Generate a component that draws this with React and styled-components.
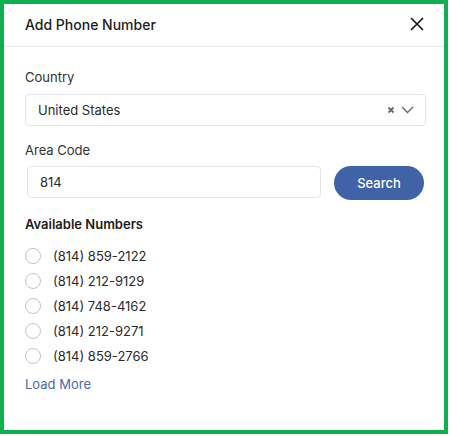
import React from 'react'
import styled, { createGlobalStyle } from 'styled-components'

const Global = createGlobalStyle`
  html, body {
    margin: 0;
    padding: 0;
    background: #fff;
  }
  body {
    font-family: Inter, "Noto Sans", sans-serif;
    color: #222;
  }
  * { box-sizing: border-box; }
`

const Frame = styled.div`
  width: 448px;
  height: 434px;
  border: 4px solid #0db04d;
  background: #fff;
  display: flex;
  flex-direction: column;
`

const Header = styled.header`
  height: 43px;
  display: flex;
  align-items: center;
  justify-content: space-between;
  padding: 0 19px 2px 21px;
  border-bottom: 1px solid #e7e9ef;
`

const Title = styled.h1`
  margin: 0;
  font-size: 14px;
  font-weight: 500;
  color: #1c1c1c;
`

const Close = styled.button`
  border: 0;
  background: none;
  padding: 0;
  width: 16px;
  height: 16px;
  display: flex;
  cursor: pointer;
`

const Body = styled.div`
  padding: 21px 18px 0 21px;
  display: flex;
  flex-direction: column;
`

const Label = styled.div`
  font-size: 13px;
  color: #333;
  line-height: 18px;
  margin-bottom: ${p => p.gap || 8}px;
`

const Select = styled.div`
  height: 32px;
  border: 1px solid #e3e5eb;
  border-radius: 4px;
  display: flex;
  align-items: center;
  padding: 0 11px 0 12px;
  font-size: 13px;
  color: #2a2a2a;
  margin-bottom: 15px;
`

const SelectValue = styled.span`
  flex: 1;
`

const SelectIcons = styled.span`
  display: flex;
  align-items: center;
  gap: 6px;
`

const SearchRow = styled.div`
  display: flex;
  align-items: flex-start;
  gap: 13px;
  padding: 0 2px;
  margin-bottom: 15px;
`

const Input = styled.input`
  flex: 1;
  height: 32px;
  border: 1px solid #e3e5eb;
  border-radius: 4px;
  padding: 0 12px;
  font: inherit;
  font-size: 13px;
  color: #2a2a2a;
  outline: none;
`

const SearchButton = styled.button`
  width: 90px;
  height: 34px;
  border: 0;
  border-radius: 17px;
  background: #4062a7;
  color: #fff;
  font: inherit;
  font-size: 13px;
  font-weight: 500;
  cursor: pointer;
`

const Heading = styled.div`
  font-size: 13px;
  font-weight: 600;
  color: #1c1c1c;
  line-height: 18px;
  margin-bottom: 14px;
`

const List = styled.div`
  display: flex;
  flex-direction: column;
  gap: 8px;
  margin-bottom: 12px;
`

const Option = styled.label`
  display: flex;
  align-items: center;
  gap: 12px;
  height: 17px;
  font-size: 13px;
  color: #2a2a2a;
  cursor: pointer;
`

const Radio = styled.span`
  width: 16px;
  height: 16px;
  border-radius: 50%;
  border: 1px solid #c4c4c4;
  background: #fff;
`

const LoadMore = styled.a`
  font-size: 13px;
  color: #4a67b0;
  text-decoration: none;
  cursor: pointer;
`

const numbers = [
  '(814) 859-2122',
  '(814) 212-9129',
  '(814) 748-4162',
  '(814) 212-9271',
  '(814) 859-2766',
]

export default function App() {
  return (
    <>
      <Global />
      <Frame>
        <Header>
          <Title>Add Phone Number</Title>
          <Close aria-label='close'>
            <svg width='16' height='16' viewBox='0 0 16 16'>
              <path d='M2 2L14 14M14 2L2 14' stroke='#111' strokeWidth='1.6' fill='none' />
            </svg>
          </Close>
        </Header>
        <Body>
          <Label>Country</Label>
          <Select>
            <SelectValue>United States</SelectValue>
            <SelectIcons>
              <svg width='8' height='8' viewBox='0 0 8 8'>
                <path d='M1.5 1.5L6.5 6.5M6.5 1.5L1.5 6.5' stroke='#666' strokeWidth='1.8' fill='none' />
              </svg>
              <svg width='13' height='8' viewBox='0 0 13 8'>
                <path d='M1 1L6.5 6.5L12 1' stroke='#666' strokeWidth='1.3' fill='none' />
              </svg>
            </SelectIcons>
          </Select>
          <Label gap={7}>Area Code</Label>
          <SearchRow>
            <Input defaultValue='814' />
            <SearchButton>Search</SearchButton>
          </SearchRow>
          <Heading>Available Numbers</Heading>
          <List>
            {numbers.map(n => (
              <Option key={n}>
                <Radio />
                {n}
              </Option>
            ))}
          </List>
          <LoadMore>Load More</LoadMore>
        </Body>
      </Frame>
    </>
  )
}
